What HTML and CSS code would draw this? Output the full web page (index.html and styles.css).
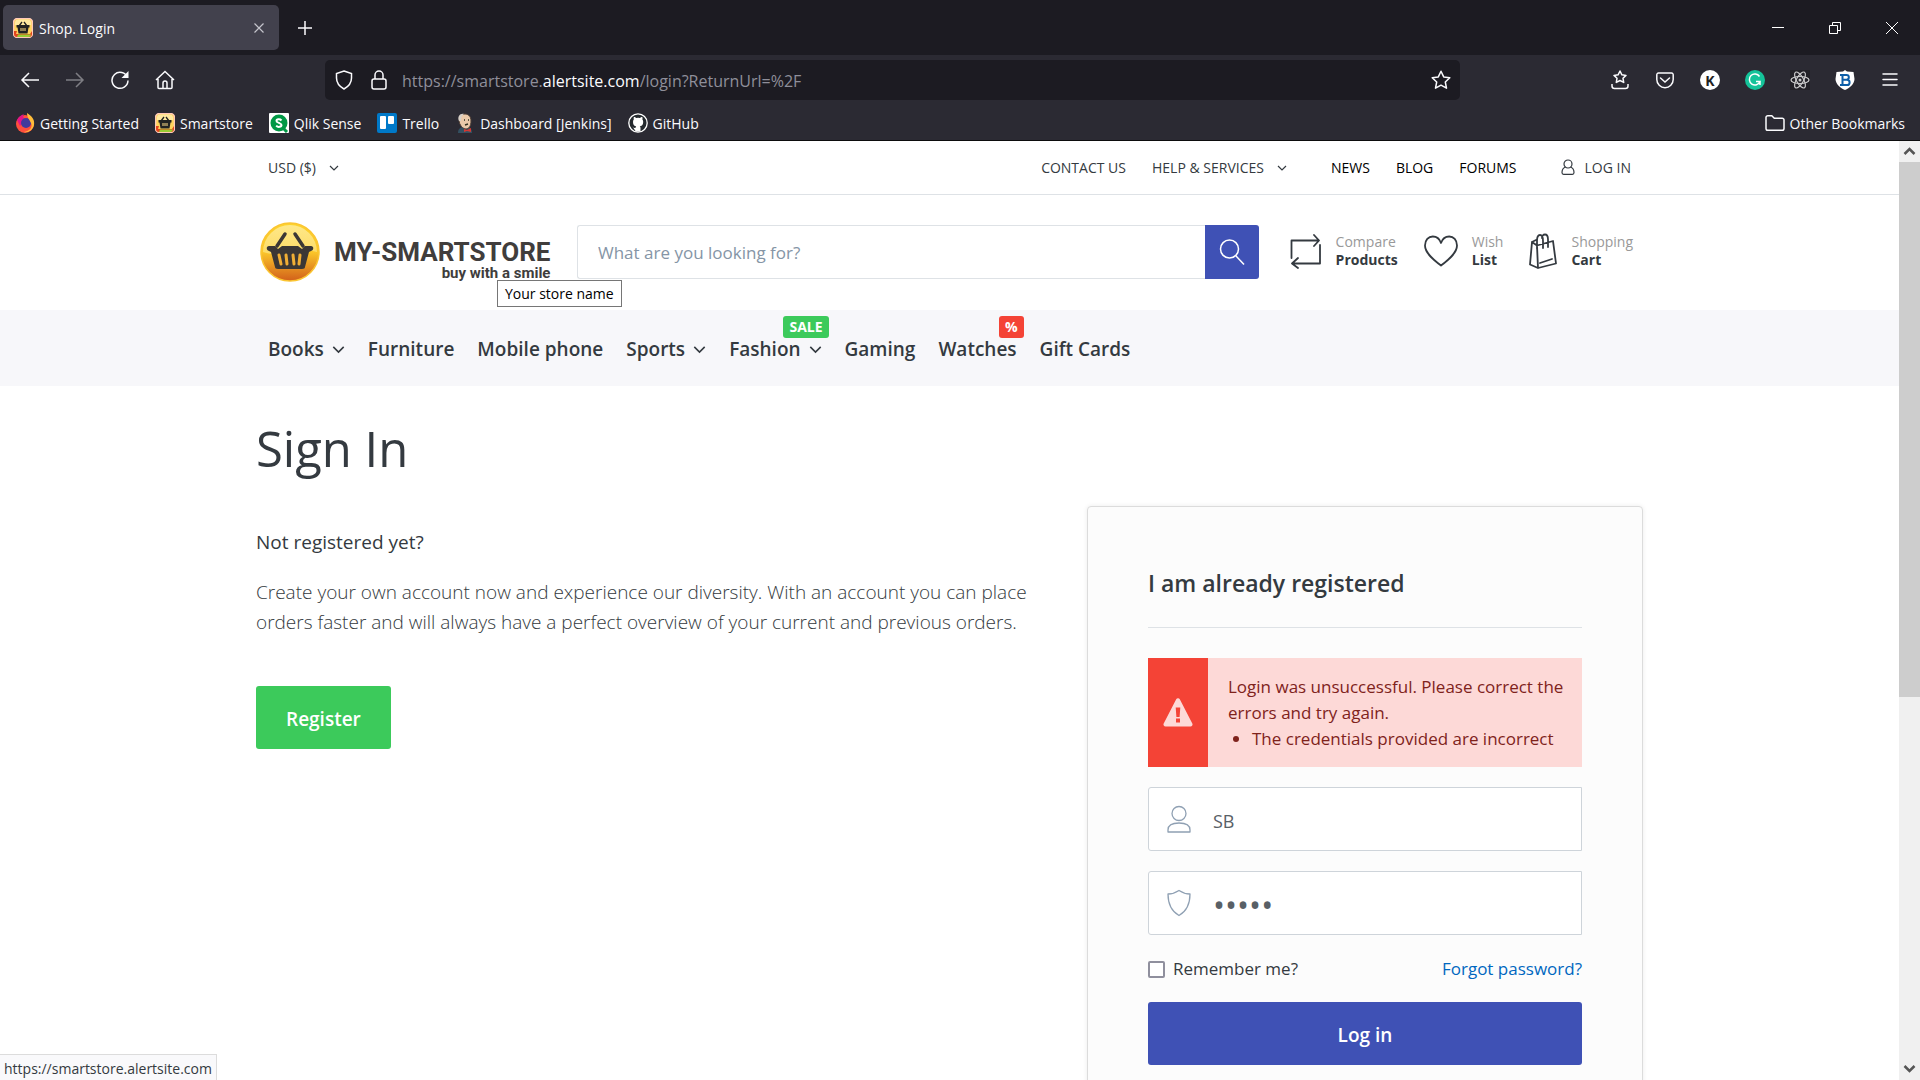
FILE: index.html
```html
<!DOCTYPE html>
<html lang="en">
<head>
<meta charset="utf-8">
<title>Shop. Login</title>
<link rel="stylesheet" href="styles.css">
</head>
<body>
<svg class="sprite" aria-hidden="true">
  <symbol id="chev" viewBox="0 0 10 10"><path d="M1 3l4 4 4-4" fill="none" stroke="currentColor" stroke-width="1.2"/></symbol>
  <symbol id="fav" viewBox="0 0 20 20">
    <rect x=".5" y=".5" width="19" height="19" rx="4" fill="#ffd45c" stroke="#ffc9b8"/>
    <path d="M2 4a3 3 0 0 1 3-2.500h10A3 3 0 0 1 18 4v3H2z" fill="#ffe9a0"/>
    <path d="M1 13h3l-1 3h14l2-3v3a3 3 0 0 1-3 3H4a3 3 0 0 1-3-3z" fill="#e2451c"/><path d="M5 16.500h13a3 3 0 0 1-2 2.500H4z" fill="#9c3"/>
    <path d="M6 8l3-4M14 8l-3-4" stroke="#222" stroke-width="1.3" fill="none"/>
    <path d="M3.500 7h13v2.500h-1l-1 6h-9l-1-6h-1z" fill="#222"/><path d="M8 10v3M10 10v3M12 10v3" stroke="#fd8" stroke-width="1"/>
  </symbol>
</svg>

<header class="chrome">
  <div class="tabbar">
    <div class="tab">
      <svg class="i20"><use href="#fav"/></svg>
      <span class="tab-title">Shop. Login</span>
      <button class="bare tab-close" aria-label="Close tab"><svg width="12" height="12" viewBox="0 0 12 12"><path d="M1.500 1.500l9 9M10.500 1.500l-9 9" stroke="#c5c4cc" stroke-width="1.200"/></svg></button>
    </div>
    <button class="bare newtab" aria-label="New tab"><svg width="16" height="16" viewBox="0 0 16 16"><path d="M8 1v14M1 8h14" stroke="#fbfbfe" stroke-width="1.500"/></svg></button>
    <div class="winbtns">
      <button class="bare" aria-label="Minimize"><svg width="14" height="14" viewBox="0 0 14 14"><path d="M1 6.500h12" stroke="#fff"/></svg></button>
      <button class="bare" aria-label="Restore"><svg width="14" height="14" viewBox="0 0 14 14" fill="none" stroke="#fff"><path d="M1.500 4.500h8v8h-8zM4.500 4v-2.500h8v8H10"/></svg></button>
      <button class="bare" aria-label="Close"><svg width="14" height="14" viewBox="0 0 14 14"><path d="M1 1l12 12M13 1L1 13" stroke="#fff"/></svg></button>
    </div>
  </div>
  <div class="toolbar">
    <div class="navbtns">
      <button class="bare" aria-label="Back"><svg class="i20" viewBox="0 0 20 20"><path d="M19 10H2M9 3l-7 7 7 7" /></svg></button>
      <button class="bare dim" aria-label="Forward"><svg class="i20" viewBox="0 0 20 20"><path d="M1 10h17M11 3l7 7-7 7"/></svg></button>
      <button class="bare" aria-label="Reload"><svg class="i20" viewBox="0 0 20 20"><path d="M17.500 7.500A8 8 0 1 0 18 10.500"/><path d="M18.500 1v7h-7z" fill="#fbfbfe" stroke="none"/></svg></button>
      <button class="bare" aria-label="Home"><svg class="i20" viewBox="0 0 20 20"><path d="M1 10l9-8.500 9 8.500M3 9v8.500a1 1 0 0 0 1 1h12a1 1 0 0 0 1-1V9M8 18v-5a2 2 0 0 1 4 0v5"/></svg></button>
    </div>
    <div class="urlbar">
      <svg class="i20" viewBox="0 0 20 20"><path d="M10 1l7.500 2.500V8c0 5-3 8.500-7.500 11C5.500 16.500 2.500 13 2.500 8V3.500z"/></svg>
      <svg class="i20 lock" viewBox="0 0 20 20"><rect x="3" y="9" width="14" height="10" rx="2"/><path d="M6 9V5a4 4 0 0 1 8 0v4"/></svg>
      <span class="url">https://smartstore.<b>alertsite.com</b>/login?ReturnUrl=%2F</span>
      <button class="bare" aria-label="Bookmark this page"><svg class="i20" viewBox="0 0 20 20"><path d="M10 1.200l2.700 5.700 6.100.8-4.500 4.300 1.200 6.200L10 15.200l-5.500 3 1.200-6.200L1.200 7.700l6.100-.8z" stroke-linejoin="round"/></svg></button>
    </div>
    <div class="exts">
      <button class="bare" aria-label="Bookmarks menu"><svg class="i20" viewBox="0 0 20 20"><path d="M10 1l1.900 3.800 4.100.6-3 2.900.7 4.100L10 10.500l-3.700 1.900.7-4.100-3-2.900 4.100-.6z" stroke-linejoin="round"/><path d="M2 14v2a2.500 2.500 0 0 0 2.500 2.500h11A2.500 2.500 0 0 0 18 16v-2"/></svg></button>
      <button class="bare" aria-label="Pocket"><svg class="i20" viewBox="0 0 20 20"><path d="M3.500 3h13A1.800 1.800 0 0 1 18.200 5v4.500a8.200 8.200 0 0 1-16.400 0V5A1.800 1.800 0 0 1 3.500 3zM5.500 8l4.500 4 4.500-4" stroke-linecap="round"/></svg></button>
      <button class="bare ext-k" aria-label="K extension">K</button>
      <button class="bare" aria-label="Grammarly"><svg class="i20" viewBox="0 0 20 20"><circle cx="10" cy="10" r="10" fill="#15c39a" stroke="none"/><path d="M14.500 6.500A5.500 5.500 0 1 0 15 11.500H11M15 11v4" stroke="#fff"/></svg></button>
      <button class="bare" aria-label="React tools"><svg class="i20" viewBox="0 0 20 20"><rect width="20" height="20" fill="#222127" stroke="none"/><g stroke="#ccc" stroke-width="1.200"><ellipse cx="10" cy="10" rx="9" ry="3.500"/><ellipse cx="10" cy="10" rx="9" ry="3.500" transform="rotate(60 10 10)"/><ellipse cx="10" cy="10" rx="9" ry="3.500" transform="rotate(120 10 10)"/></g><circle cx="10" cy="10" r="1.500" fill="#ccc" stroke="none"/></svg></button>
      <button class="bare" aria-label="Bitwarden"><svg class="i20" viewBox="0 0 20 20"><path d="M10 0l2 1.500 6.500.5L19.500 9c0 5-5 9-9.500 11C5.500 18 .5 14 .5 9l1-7L8 1.500z" fill="#fff" stroke="none"/><path d="M5 5h6.500a2.300 2.300 0 0 1 0 4.700H7.500M7.500 5v10M5 15h7a2.600 2.600 0 0 0 0-5.200" stroke="#0d5ea8" stroke-width="2"/></svg></button>
      <button class="bare" aria-label="Menu"><svg class="i20" viewBox="0 0 20 20"><path d="M3 4h14M3 9.500h14M3 15h14" stroke-linecap="round"/></svg></button>
    </div>
  </div>
  <nav class="bookmarks">
    <a href="#"><svg class="i20" viewBox="0 0 20 20"><circle cx="10" cy="11" r="9" fill="#ff4f3d" stroke="none"/><path d="M2 7C4 3 7 2 9 1 7 4 9 5 10 6l-5 7z" fill="#e31587" stroke="none"/><circle cx="11" cy="10" r="5" fill="#423a9c" stroke="none"/><path d="M12 0c5 3 8 7 7 12s-6 8-10 7c6-1 9-5 7-9-1-3-4-5-4-10z" fill="#ffbd3a" stroke="none"/></svg>Getting Started</a>
    <a href="#"><svg class="i20"><use href="#fav"/></svg>Smartstore</a>
    <a href="#"><svg class="i20" viewBox="0 0 20 20"><rect width="20" height="20" rx="1" fill="#fff" stroke="none"/><circle cx="10" cy="10" r="8.500" fill="#009845" stroke="none"/><path d="M14 15l4 4" stroke="#009845" stroke-width="3"/><path d="M12.500 7.500C11 5.800 7.500 6 7.500 8s5 1.800 5 4-3.700 2.500-5.300.7" stroke="#fff" stroke-width="2"/></svg>Qlik Sense</a>
    <a href="#"><svg class="i20" viewBox="0 0 20 20"><rect width="20" height="20" rx="2" fill="#0079c9" stroke="none"/><rect x="3" y="3" width="6" height="13" rx="1" fill="#fff" stroke="none"/><rect x="11" y="3" width="6" height="8" rx="1" fill="#fff" stroke="none"/></svg>Trello</a>
    <a href="#"><svg class="i20" viewBox="0 0 20 20"><path d="M3 20c0-4 2-5 4-6h6c3 1 4 3 4 6z" fill="#335061" stroke="none"/><path d="M4 7c0-4 3-6 6-6s6 2 6 7-2 8-5 8-7-4-7-9z" fill="#eac9a9" stroke="#4a3b33" stroke-width="1"/><path d="M4 8C2 4 5 0 9 1c-3 2-3 5-3 7z" fill="#d7d0c8" stroke="none"/><path d="M9 7h1M13 7h1M10 12l3-1" stroke="#332"/><path d="M9 16l3 1 4-2v4l-4-1-3 1z" fill="#d33833" stroke="none"/></svg>Dashboard [Jenkins]</a>
    <a href="#"><svg class="i20" viewBox="0 0 20 20"><circle cx="10" cy="10" r="9.200" fill="#24292e" stroke="#fff" stroke-width="1.300"/><path d="M7.500 18v-3c-2 .3-2.500-.8-3.200-1.700M5 9c0-1 .3-1.800.8-2.400C5.500 5.700 5.600 5 5.900 4c1 0 1.800.6 2.500 1a9 9 0 0 1 3.400 0c.7-.4 1.500-1 2.500-1 .3 1 .4 1.700.1 2.600.5.600.8 1.400.8 2.400 0 3-1.700 4-3.400 4.300.5.500.7 1 .7 2V18.500h-5V15c0-.8.200-1.300.7-1.800C6.500 13 5 12 5 9z" fill="#fff" stroke="none"/></svg>GitHub</a>
    <a href="#" class="other"><svg class="i20" viewBox="0 0 20 20"><path d="M1 4.500A1.800 1.800 0 0 1 2.800 2.700h4l2.500 2.500h7.900A1.800 1.800 0 0 1 19 7v8.500a1.800 1.800 0 0 1-1.800 1.800H2.800A1.800 1.800 0 0 1 1 15.500z"/></svg>Other Bookmarks</a>
  </nav>
</header>

<div class="view">
  <div class="page">
    <div class="topbar">
      <div class="wrap topbar-in">
        <button class="bare link">USD ($)<svg class="chev"><use href="#chev"/></svg></button>
        <nav class="toplinks">
          <a href="#">CONTACT US</a>
          <button class="bare link">HELP &amp; SERVICES<svg class="chev"><use href="#chev"/></svg></button>
          <span class="strong"><a href="#">NEWS</a><a href="#">BLOG</a><a href="#">FORUMS</a></span>
          <a href="#" class="login-link"><svg width="14" height="17" viewBox="0 0 14 17" fill="none" stroke="currentColor" stroke-width="1.200"><circle cx="7" cy="5" r="4"/><path d="M4.500 8C2 9 1 11 1 13.500c0 1 .6 1.800 1.600 1.800h8.800c1 0 1.600-.8 1.600-1.800C13 11 12 9 9.500 8"/></svg>LOG IN</a>
        </nav>
      </div>
    </div>
    <div class="wrap brandbar">
      <a href="#" class="logo" aria-label="Your store name">
        <svg width="60" height="60" viewBox="0 0 60 60">
          <defs><linearGradient id="lg" x1="0" y1="0" x2="0" y2="1"><stop offset="0" stop-color="#fdd32c"/><stop offset=".5" stop-color="#fbc62a"/><stop offset="1" stop-color="#d2601a"/></linearGradient><linearGradient id="gl" x1="0" y1="0" x2="0" y2="1"><stop offset="0" stop-color="#fff0a8"/><stop offset="1" stop-color="#fde27a"/></linearGradient></defs>
          <circle cx="30" cy="30" r="29" fill="url(#lg)" stroke="#fbc531" stroke-width="1.500"/>
          <path d="M3 30a27 27 0 0 1 54 0c-14-5-38 6-54 0z" fill="url(#gl)" opacity=".75"/>
          <path d="M17 24l8-12M43 24l-8-12" stroke="#3b3735" stroke-width="3.500" stroke-linecap="round"/>
          <path d="M9 24h6l3 3 4-3h16l4 3 3-3h6c3 0 3 4 0 5l-2 1-4 15c0 1-1 2-3 2H18c-2 0-3-1-3-2l-4-15-2-1c-3-1-3-5 0-5z" fill="#3b3735"/>
          <path d="M19 33l2 9M26 33l1 9M33 33l1 9M40 33l-1 9" stroke="#f0ae35" stroke-width="3" stroke-linecap="round"/>
        </svg>
        <span class="logo-words"><span class="logo-name">MY-SMARTSTORE</span><span class="logo-tag">buy with a smile</span></span>
      </a>
      <form class="search">
        <input type="text" aria-label="Search" placeholder="What are you looking for?">
        <button type="button" aria-label="Search"><svg width="26" height="28" viewBox="0 0 26 28" fill="none" stroke="#fff" stroke-width="1.500"><circle cx="10.500" cy="11" r="9"/><path d="M17 18l8 8.500"/></svg></button>
      </form>
      <nav class="tools">
        <a href="#"><svg width="32" height="36" viewBox="0 0 32 36" fill="none" stroke="#343a40" stroke-width="1.800" stroke-linecap="round" stroke-linejoin="round"><path d="M1.500 25V7.500H29M24 2l5 5.500-5 5.500M30 12v18.500H3M8 25l-6 5.500L8 35"/></svg><span>Compare<b>Products</b></span></a>
        <a href="#"><svg width="34" height="32" viewBox="0 0 34 32" fill="none" stroke="#343a40" stroke-width="1.800" stroke-linejoin="round"><path d="M17 30.500C11 26 1 18.500 1 10.500 1 5 4.500 1.500 8.800 1.500c4 0 7 3 8.200 6.500 1.200-3.500 4.200-6.500 8.200-6.500C29.500 1.500 33 5 33 10.500c0 8-10 15.500-16 20z"/></svg><span>Wish<b>List</b></span></a>
        <a href="#"><svg width="28" height="36" viewBox="0 0 28 36" fill="none" stroke="#343a40" stroke-width="1.800" stroke-linejoin="round" stroke-linecap="round"><path d="M3 9l5 3.500L24 8l3 22.500L9 35l-8-3.500zM3 9l4-2M8 12.500L9 35M8 16V8c0-4 1-6 3-6 1.500 0 3 2 3 6v7M13 5c0-2 1-3.500 3-3.500s3 2 3 5V14M11 30l12-4"/></svg><span>Shopping<b>Cart</b></span></a>
      </nav>
      <div class="tooltip" role="tooltip">Your store name</div>
    </div>
    <div class="menubar">
      <nav class="wrap menu">
        <a href="#">Books<svg class="chev"><use href="#chev"/></svg></a>
        <a href="#">Furniture</a>
        <a href="#">Mobile phone</a>
        <a href="#">Sports<svg class="chev"><use href="#chev"/></svg></a>
        <a href="#">Fashion<svg class="chev"><use href="#chev"/></svg><span class="badge sale">SALE</span></a>
        <a href="#">Gaming</a>
        <a href="#">Watches<span class="badge pct">%</span></a>
        <a href="#">Gift Cards</a>
      </nav>
    </div>
    <main class="wrap main">
      <h1>Sign In</h1>
      <div class="cols">
        <section class="signup">
          <h2>Not registered yet?</h2>
          <p>Create your own account now and experience our diversity. With an account you can place orders faster and will always have a perfect overview of your current and previous orders.</p>
          <button class="btn green">Register</button>
        </section>
        <section class="card">
          <h2>I am already registered</h2>
          <div class="alert" role="alert">
            <div class="alert-icon"><svg width="30" height="29" viewBox="0 0 30 29"><path d="M13.200 1.300a2 2 0 0 1 3.600 0l12.500 24.300A2 2 0 0 1 27.500 28.500h-25A2 2 0 0 1 .7 25.600z" fill="#fdd9d7"/><path d="M12.700 9.500h4.600l-.7 9.500h-3.200zM13 20.500h4V24.500h-4z" fill="#f44336"/></svg></div>
            <div class="alert-text">Login was unsuccessful. Please correct the errors and try again.<ul><li>The credentials provided are incorrect</li></ul></div>
          </div>
          <div class="field"><svg width="24" height="28" viewBox="0 0 24 28"><circle cx="12" cy="8.500" r="7"/><path d="M1 27v-2c0-5 5-7 11-7s11 2 11 7v2z" stroke-linejoin="round"/></svg><input type="text" aria-label="Username" value="SB"></div>
          <div class="field"><svg width="24" height="28" viewBox="0 0 24 28"><path d="M12 1.500c3 2 7 3.500 11 3.500 0 9-3 17-11 21.500C4 22 1 14 1 5c4 0 8-1.500 11-3.500z" stroke-linejoin="round"/></svg><input type="password" aria-label="Password" value="abcde"></div>
          <div class="row"><label><input type="checkbox">Remember me?</label><a href="#">Forgot password?</a></div>
          <button class="btn blue">Log in</button>
        </section>
      </div>
    </main>
  </div>
  <div class="scrollbar" aria-hidden="true">
    <svg width="21" height="21" viewBox="0 0 21 21"><path d="M5.500 13l5-5 5 5" fill="none" stroke="#555" stroke-width="2.500"/></svg>
    <div class="thumb"></div>
    <svg width="21" height="21" viewBox="0 0 21 21"><path d="M5.500 7l5 5 5-5" fill="none" stroke="#555" stroke-width="2.500"/></svg>
  </div>
  <div class="status">https://smartstore.alertsite.com</div>
</div>
</body>
</html>
```
FILE: styles.css
```css
* { box-sizing: border-box; }
body {
  margin: 0;
  height: 100vh;
  display: flex;
  flex-direction: column;
  overflow: hidden;
  font-family: "Open Sans", "Noto Sans", sans-serif;
  color: #343a40;
  background: #fff;
}
a { color: inherit; text-decoration: none; }
h1, h2, p, ul { margin: 0; }
button, input { font-family: inherit; }
svg { flex: none; display: block; }
.sprite { position: absolute; width: 0; height: 0; }
.bare {
  background: none;
  border: 0;
  padding: 0;
  color: inherit;
  font-size: inherit;
  display: flex;
  align-items: center;
  justify-content: center;
}

/* browser chrome */
.chrome { background: #2b2a33; color: #fbfbfe; border-bottom: 1px solid #0c0c0d; flex: none; }
.i20 { width: 20px; height: 20px; fill: none; stroke: #fbfbfe; stroke-width: 1.5; }
.i20 use { stroke: none; }
.tabbar { height: 55px; background: #1c1b22; display: flex; align-items: center; padding-left: 3px; }
.tab {
  width: 276px;
  height: 45px;
  border-radius: 5px;
  background: #42414d;
  display: flex;
  align-items: center;
  gap: 6px;
  padding: 0 14px 0 10px;
  font-size: 14px;
}
.tab-title { flex: 1; padding-top: 1px; }
.newtab { width: 52px; height: 45px; }
.winbtns { margin-left: auto; display: flex; }
.winbtns .bare { width: 57px; height: 55px; }
.toolbar { height: 50px; display: flex; align-items: center; padding: 0 8px 0 7px; }
.navbtns { display: flex; width: 318px; }
.navbtns .bare { width: 45px; height: 40px; }
.dim { opacity: .4; }
.urlbar {
  flex: 1;
  height: 40px;
  border-radius: 5px;
  background: #1c1b22;
  display: flex;
  align-items: center;
  padding: 0 9px;
}
.lock { margin: 0 13px 0 15px; }
.url { flex: 1; padding-top: 2px; font-size: 16px; color: #8f8f9a; }
.url b { font-weight: 400; color: #fbfbfe; }
.exts { width: 452px; display: flex; justify-content: flex-end; }
.exts .bare { width: 45px; height: 40px; }
.exts .ext-k { width: 20px; height: 20px; margin: 0 12px 0 13px; align-self: center; border-radius: 50%; background: #fff; color: #222; font-size: 14px; font-weight: 700; }
.bookmarks { height: 35px; display: flex; align-items: center; gap: 16px; padding: 1px 15px 0; font-size: 14px; }
.bookmarks a { display: flex; align-items: center; gap: 5px; }
.bookmarks .other { margin-left: auto; }

/* viewport */
.view { flex: 1; min-height: 0; display: flex; position: relative; overflow: hidden; }
.page { flex: 1; min-width: 0; }
.scrollbar { width: 21px; background: #f0f0f0; display: flex; flex-direction: column; }
.thumb { flex: 0 0 57%; background: #cdcdcd; }
.scrollbar svg:last-child { margin-top: auto; }
.status {
  position: absolute;
  left: 0;
  bottom: 0;
  padding: 3px 4px 0;
  border: solid #dcdcdc;
  border-width: 1px 1px 0 0;
  background: #f9f9fb;
  font-size: 14px;
  line-height: 22px;
}

.wrap { max-width: 1387px; margin: 0 auto; }
.chev { width: 10px; height: 10px; }

/* top bar */
.topbar { border-bottom: 1px solid #dee2e6; font-size: 14px; }
.topbar-in { height: 53px; padding: 0 12px; display: flex; align-items: center; justify-content: space-between; }
.topbar .link { gap: 13px; }
.toplinks { display: flex; align-items: center; gap: 26px; }
.strong { display: flex; gap: 26px; margin: 0 18px; color: #000; font-weight: 500; }
.login-link { display: flex; align-items: center; gap: 10px; }

/* brand bar */
.brandbar { height: 115px; display: flex; align-items: center; position: relative; padding: 0 10px 2px 4px; }
.logo { display: flex; align-items: center; gap: 14px; width: 317px; }
.logo-words { display: flex; flex-direction: column; align-items: flex-end; padding-top: 14px; font-family: Roboto, sans-serif; font-weight: 700; color: #403d3c; }
.logo-name { font-size: 26px; line-height: 28px; }
.logo-tag { font-size: 15px; line-height: 14px; }
.search { flex: 1; height: 54px; display: flex; }
.search input { flex: 1; min-width: 0; border: 1px solid #dee2e6; border-right: 0; border-radius: 3px 0 0 3px; padding: 2px 20px 0; font-size: 17px; }
.search input::placeholder { color: #8595a6; }
.search button { width: 54px; border: 0; padding: 0; border-radius: 0 3px 3px 0; background: #3f51b5; display: flex; align-items: center; justify-content: center; }
.tools { display: flex; gap: 26px; margin-left: 31px; padding-bottom: 2px; font-size: 14px; line-height: 18px; }
.tools a { display: flex; align-items: center; gap: 14px; color: #999; }
.tools b { display: block; color: #343a40; }
.tooltip { position: absolute; left: 241px; top: 85px; border: 1px solid #767676; background: #fff; color: #000; padding: 1px 7px 0; font-size: 14px; line-height: 24px; }

/* category menu */
.menubar { background: #f7f7fa; }
.menu { height: 76px; display: flex; align-items: center; gap: 23px; padding: 2px 12px 0; font-size: 19px; font-weight: 600; line-height: 28px; }
.menu a { display: flex; align-items: center; gap: 8px; position: relative; }
.menu .chev { width: 13px; height: 13px; }
.badge { position: absolute; bottom: 25px; border-radius: 3px; padding: 0 6px; color: #fff; font-size: 14px; font-weight: 700; line-height: 22px; }
.sale { right: -7px; background: #3cca5b; }
.pct { right: -7px; background: #f44336; }

/* sign in */
.main { padding-top: 26px; }
h1 { font-size: 49px; font-weight: 400; line-height: 72px; }
.cols { display: flex; justify-content: space-between; align-items: flex-start; margin-top: 22px; }
.signup { width: 772px; padding-top: 21px; }
.signup h2 { font-size: 19px; font-weight: 400; line-height: 30px; margin-bottom: 20px; }
.signup p { font-size: 19px; font-weight: 300; line-height: 30px; margin-bottom: 49px; }
.btn { height: 63px; border: 0; border-radius: 3px; color: #fff; font-size: 19px; font-weight: 600; padding: 2px 30px 0; }
.green { background: #3cca5b; }
.blue { background: #3f51b5; width: 100%; margin-top: 20px; }
.card { width: 556px; border: 1px solid #dcdcdc; border-radius: 4px; background: #fcfcfc; box-shadow: 0 0 5px rgba(0, 0, 0, .08); padding: 60px 60px 80px; }
.card h2 { font-size: 23px; font-weight: 600; line-height: 32px; padding-bottom: 28px; border-bottom: 1px solid #dee2e6; margin-bottom: 30px; }
.alert { display: flex; background: #fdd9d7; color: #7f231c; font-size: 17px; line-height: 26px; }
.alert-icon { width: 60px; flex: none; background: #f44336; display: flex; align-items: center; justify-content: center; }
.alert-text { padding: 16px 10px 15px 20px; }
.alert ul { padding-left: 24px; }
.field { display: flex; align-items: center; height: 64px; margin-top: 20px; border: 1px solid #ced4da; border-radius: 3px 0 0 3px; background: #fff; padding-left: 18px; }
.field svg { fill: none; stroke: #8fa0b3; stroke-width: 1.3; }
.field input { flex: 1; min-width: 0; height: 60px; border: 0; outline: 0; background: none; padding: 3px 22px 0; color: #596066; font-size: 18px; }
.field input[type="password"] { font-size: 32px; }
.row { display: flex; justify-content: space-between; margin-top: 21px; font-size: 17px; line-height: 26px; }
.row label { display: flex; align-items: center; gap: 8px; }
.row input { appearance: none; width: 17px; height: 17px; margin: 0; border: 2px solid #8f8f9d; border-radius: 2px; background: #fff; }
.row a { color: #0067c0; }
```
